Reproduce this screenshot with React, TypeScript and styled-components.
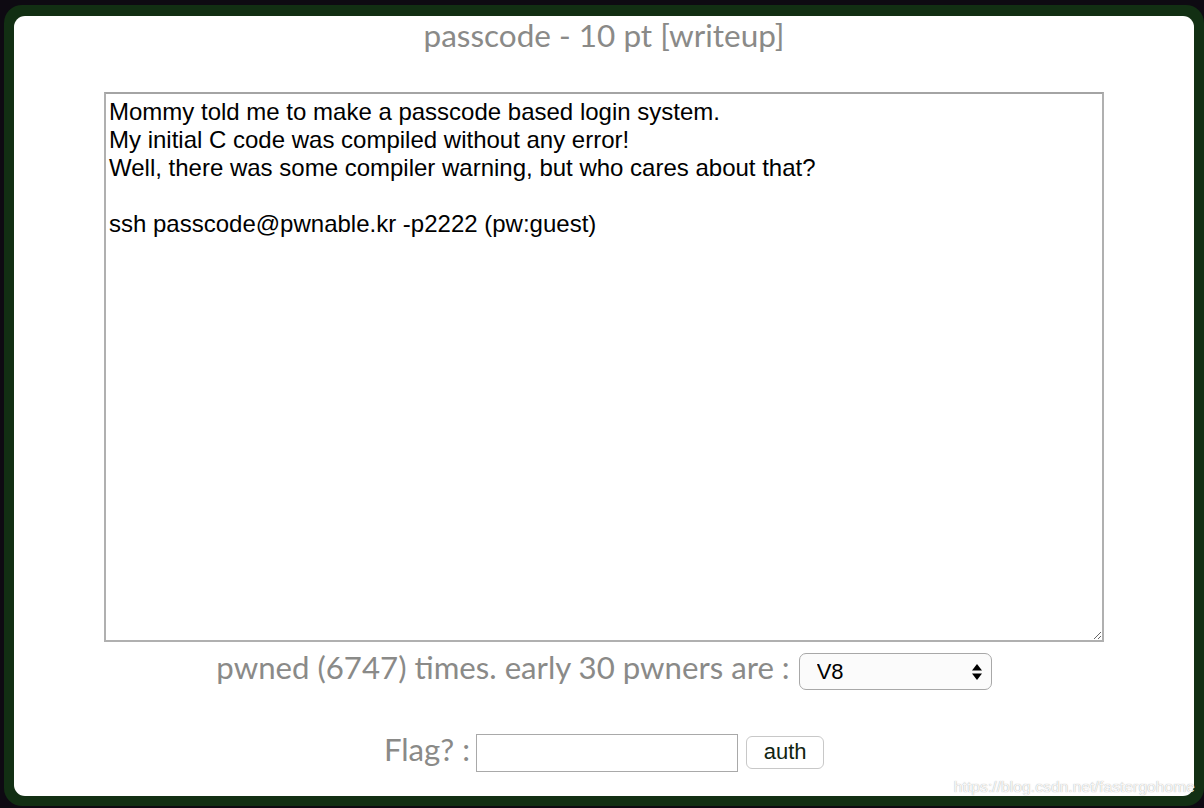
import styled, { createGlobalStyle } from "styled-components";

const GlobalStyle = createGlobalStyle`
    html, body {
        margin: 0;
        padding: 0;
        background: #0e0a12;
    }
    body {
        width: 1204px;
        height: 808px;
        overflow: hidden;
    }
`;

const Frame = styled.div`
    box-sizing: border-box;
    margin: 5px 0 0 4px;
    width: 1200px;
    height: 801px;
    padding: 11px 10px 10px 10px;
    background: #122f13;
    border-radius: 18px;
    position: relative;
`;

const Card = styled.div`
    box-sizing: border-box;
    width: 1180px;
    height: 780px;
    background: #ffffff;
    border-radius: 11px;
    padding-top: 1px;
    display: flex;
    flex-direction: column;
    align-items: center;
    font-family: Lato, "Open Sans", sans-serif;
    color: #8a8a88;
`;

const Title = styled.div`
    font-size: 31.5px;
    line-height: 1.2;
    text-align: center;
`;

const Description = styled.textarea`
    box-sizing: border-box;
    margin-top: 37px;
    width: 1000px;
    height: 550px;
    padding: 4px 3px;
    border: 2px solid #b0b0b0;
    border-top-color: #a4a4a4;
    border-radius: 0;
    font-family: "Liberation Sans", Arial, sans-serif;
    font-size: 24px;
    line-height: 28px;
    color: #000;
    background: #fff;
    resize: both;
    outline: none;
`;

const Row = styled.div<{ $top: number }>`
    display: flex;
    align-items: center;
    justify-content: center;
    height: 44px;
    margin-top: ${(p) => p.$top}px;
`;

const Label = styled.span<{ $lift: number; $gap: number }>`
    font-size: 31.2px;
    line-height: 1.2;
    margin-bottom: ${(p) => p.$lift}px;
    margin-right: ${(p) => p.$gap}px;
    white-space: pre;
`;

const SelectWrap = styled.div`
    position: relative;
    width: 193px;
    height: 37px;
`;

const Select = styled.select`
    appearance: none;
    box-sizing: border-box;
    width: 100%;
    height: 100%;
    padding: 0 0 0 17px;
    border: 1.5px solid #a8a8a8;
    border-radius: 7px;
    background: #fbfbfb;
    font-family: "Liberation Sans", Arial, sans-serif;
    font-size: 22px;
    color: #000;
    outline: none;
`;

const Arrows = styled.svg`
    position: absolute;
    right: 9px;
    top: 10px;
    pointer-events: none;
`;

const FlagInput = styled.input`
    box-sizing: border-box;
    width: 262px;
    height: 38px;
    border: 1px solid #a9a9a9;
    border-radius: 0;
    padding: 0 6px;
    font-family: "Liberation Sans", Arial, sans-serif;
    font-size: 20px;
    background: #fff;
    outline: none;
`;

const AuthButton = styled.button`
    box-sizing: border-box;
    margin-left: 8px;
    width: 78px;
    height: 33px;
    border: 1px solid #c8c8c8;
    border-radius: 6px;
    background: #fff;
    font-family: "Liberation Sans", Arial, sans-serif;
    font-size: 22px;
    color: #112411;
    padding: 0 0 2px 0;
`;

const Watermark = styled.div`
    position: absolute;
    right: 9px;
    bottom: 10px;
    font-family: "Liberation Sans", Arial, sans-serif;
    font-size: 15.5px;
    color: rgba(255, 255, 255, 0.92);
    text-shadow: 0 0 1px rgba(110, 110, 110, 0.7);
    letter-spacing: 0.1px;
`;

const text = `Mommy told me to make a passcode based login system.
My initial C code was compiled without any error!
Well, there was some compiler warning, but who cares about that?

ssh passcode@pwnable.kr -p2222 (pw:guest)`;

const App = () => {
    return (
        <>
            <GlobalStyle />
            <Frame>
                <Card>
                    <Title>passcode - 10 pt [writeup]</Title>
                    <Description readOnly defaultValue={text} />
                    <Row $top={8}>
                        <Label $lift={9} $gap={9}>pwned (6747) times. early 30 pwners are :</Label>
                        <SelectWrap>
                            <Select defaultValue="V8">
                                <option>V8</option>
                            </Select>
                            <Arrows width="12" height="18" viewBox="0 0 12 18">
                                <path d="M6 1 L11 7.5 L1 7.5 Z" fill="#000" />
                                <path d="M6 17 L11 10.5 L1 10.5 Z" fill="#000" />
                            </Arrows>
                        </SelectWrap>
                    </Row>
                    <Row $top={37}>
                        <Label $lift={6} $gap={6}>Flag? :</Label>
                        <FlagInput type="text" />
                        <AuthButton type="button">auth</AuthButton>
                    </Row>
                </Card>
                <Watermark>https://blog.csdn.net/fastergohome</Watermark>
            </Frame>
        </>
    );
};

export default App;
